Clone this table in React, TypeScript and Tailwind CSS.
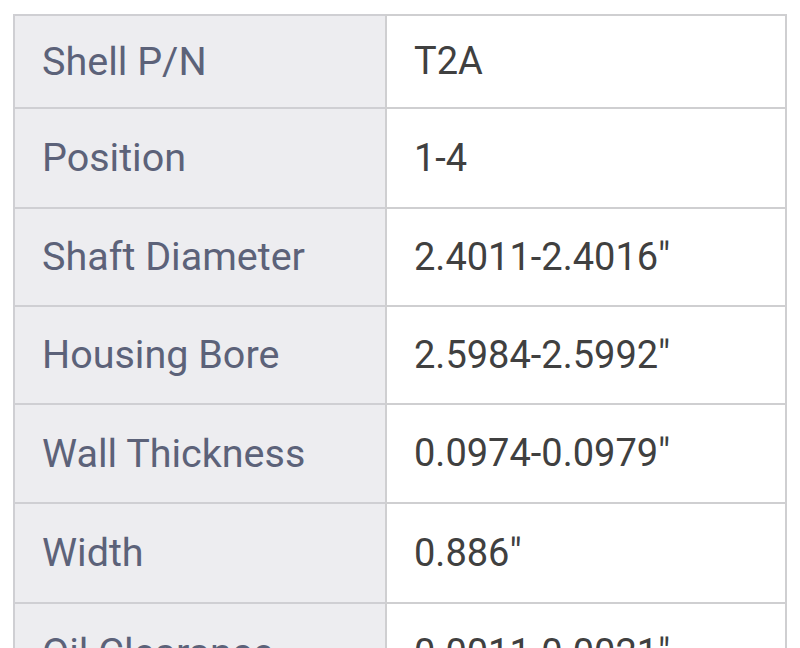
import React from "react";

const rows: { label: string; value: string; h: string }[] = [
  { label: "Shell P/N", value: "T2A", h: "h-[93px]" },
  { label: "Position", value: "1-4", h: "h-[100px]" },
  { label: "Shaft Diameter", value: "2.4011-2.4016\"", h: "h-[98px]" },
  { label: "Housing Bore", value: "2.5984-2.5992\"", h: "h-[98px]" },
  { label: "Wall Thickness", value: "0.0974-0.0979\"", h: "h-[99px]" },
  { label: "Width", value: "0.886\"", h: "h-[100px]" },
  { label: "Oil Clearance", value: "0.0011-0.0021\"", h: "h-[100px]" },
];

export default function App() {
  return (
    <div
      className="w-[800px] h-[648px] overflow-hidden bg-white pt-[14px] pl-[13px]"
      style={{ fontFamily: "Roboto, 'Liberation Sans', sans-serif" }}
    >
      <div className="flex flex-col w-[774px]">
        {rows.map((r) => (
          <div key={r.label} className={`flex ${r.h}`}>
            <div className="w-[372px] flex items-center pl-[27px] bg-[#ededf0] border-l-2 border-t-2 border-[#cfcfd3] text-[39.5px] text-[#5c6279]">
              {r.label}
            </div>
            <div className="flex-1 flex items-center pl-[27px] bg-white border-l-2 border-r-2 border-t-2 border-[#cfcfd1] text-[38px] text-[#404040]">
              {r.value}
            </div>
          </div>
        ))}
      </div>
    </div>
  );
}
